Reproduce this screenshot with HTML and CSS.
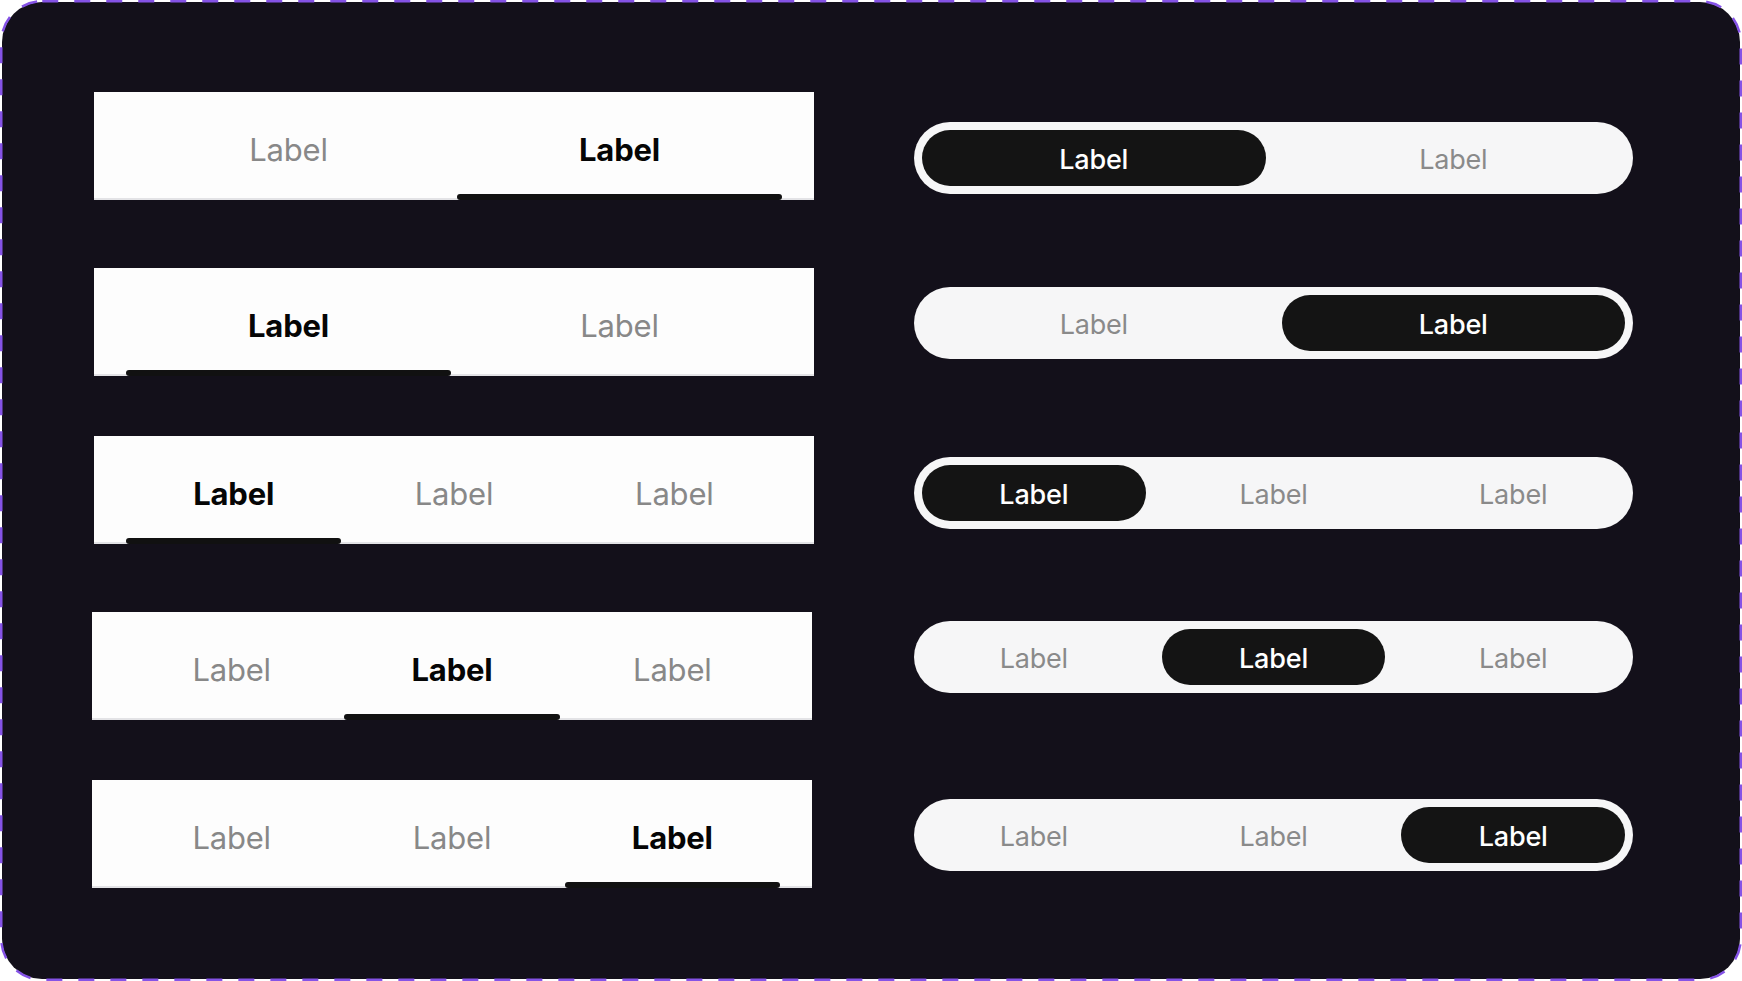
FILE: index.html
```html
<!DOCTYPE html>
<html lang="en">
<head>
<meta charset="utf-8">
<title>Tabs and segmented controls</title>
<link rel="stylesheet" href="styles.css">
</head>
<body>
<div class="frame">
  <svg class="frame-border" width="1742" height="981" viewBox="0 0 1742 981" aria-hidden="true">
    <rect x="1.25" y="1.25" width="1739.5" height="978.5" rx="41" ry="41" fill="none" stroke="#8553e6" stroke-width="2.5" stroke-dasharray="16 16"/>
  </svg>
  <div class="canvas">
    <div class="col col-tabs">
      <div class="tabs tabs-2">
        <div class="tab">Label</div>
        <div class="tab is-active">Label</div>
      </div>
      <div class="tabs tabs-2">
        <div class="tab is-active">Label</div>
        <div class="tab">Label</div>
      </div>
      <div class="tabs tabs-3">
        <div class="tab is-active">Label</div>
        <div class="tab">Label</div>
        <div class="tab">Label</div>
      </div>
      <div class="tabs tabs-3 tabs-shift">
        <div class="tab">Label</div>
        <div class="tab is-active">Label</div>
        <div class="tab">Label</div>
      </div>
      <div class="tabs tabs-3 tabs-shift">
        <div class="tab">Label</div>
        <div class="tab">Label</div>
        <div class="tab is-active">Label</div>
      </div>
    </div>
    <div class="col col-seg">
      <div class="seg">
        <div class="seg-item is-active">Label</div>
        <div class="seg-item">Label</div>
      </div>
      <div class="seg">
        <div class="seg-item">Label</div>
        <div class="seg-item is-active">Label</div>
      </div>
      <div class="seg">
        <div class="seg-item is-active">Label</div>
        <div class="seg-item">Label</div>
        <div class="seg-item">Label</div>
      </div>
      <div class="seg">
        <div class="seg-item">Label</div>
        <div class="seg-item is-active">Label</div>
        <div class="seg-item">Label</div>
      </div>
      <div class="seg">
        <div class="seg-item">Label</div>
        <div class="seg-item">Label</div>
        <div class="seg-item is-active">Label</div>
      </div>
    </div>
  </div>
</div>
</body>
</html>
```
FILE: styles.css
```css
* { box-sizing: border-box; }

html, body {
  margin: 0;
  padding: 0;
  background: #ffffff;
}

body {
  font-family: "Inter", "Lato", "Liberation Sans", sans-serif;
}

.frame {
  position: relative;
  width: 1742px;
  height: 981px;
  overflow: hidden;
}

.frame-border {
  position: absolute;
  left: 0;
  top: 0;
  pointer-events: none;
  z-index: 2;
}

.canvas {
  margin: 2px;
  width: 1738px;
  height: 977px;
  border-radius: 40px;
  background: #13101a;
  display: flex;
  gap: 100px;
  padding-left: 92px;
}

.col {
  display: flex;
  flex-direction: column;
  align-items: flex-start;
}

/* ---------- underline tabs ---------- */
.col-tabs {
  width: 720px;
  padding-top: 90px;
}

.tabs {
  width: 720px;
  height: 108px;
  background: #fdfdfd;
  border-bottom: 2px solid #e3e3e6;
  display: flex;
  padding: 0 32px;
}

.tabs-2 { gap: 6px; }
.tabs-3 { gap: 5px; }

.col-tabs .tabs:nth-child(2) { margin-top: 68px; }
.col-tabs .tabs:nth-child(3) { margin-top: 60px; }
.col-tabs .tabs:nth-child(4) { margin-top: 68px; }
.col-tabs .tabs:nth-child(5) { margin-top: 60px; }

.tabs-shift { margin-left: -2px; }

.tab {
  flex: 1 1 0;
  position: relative;
  display: flex;
  align-items: center;
  justify-content: center;
  padding-top: 8px;
  font-size: 31px;
  font-weight: 400;
  letter-spacing: -0.2px;
  color: #888888;
}

.tab.is-active {
  color: #050505;
  font-weight: 700;
}

.tab.is-active::after {
  content: "";
  position: absolute;
  left: 0;
  right: 0;
  bottom: -2px;
  height: 6px;
  border-radius: 3px;
  background: #111111;
}

/* ---------- segmented pills ---------- */
.col-seg {
  width: 719px;
  padding-top: 120px;
}

.seg {
  width: 719px;
  height: 72px;
  padding: 8px;
  border-radius: 36px;
  background: #f6f6f7;
  display: flex;
  gap: 16px;
}

.col-seg .seg:nth-child(2) { margin-top: 93px; }
.col-seg .seg:nth-child(3) { margin-top: 98px; }
.col-seg .seg:nth-child(4) { margin-top: 92px; }
.col-seg .seg:nth-child(5) { margin-top: 106px; }

.seg-item {
  flex: 1 1 0;
  border-radius: 28px;
  display: flex;
  align-items: center;
  justify-content: center;
  padding-top: 2px;
  font-size: 27px;
  font-weight: 400;
  letter-spacing: -0.2px;
  color: #8a8a8a;
}

.seg-item.is-active {
  background: #141414;
  color: #ffffff;
  font-weight: 500;
}
```
